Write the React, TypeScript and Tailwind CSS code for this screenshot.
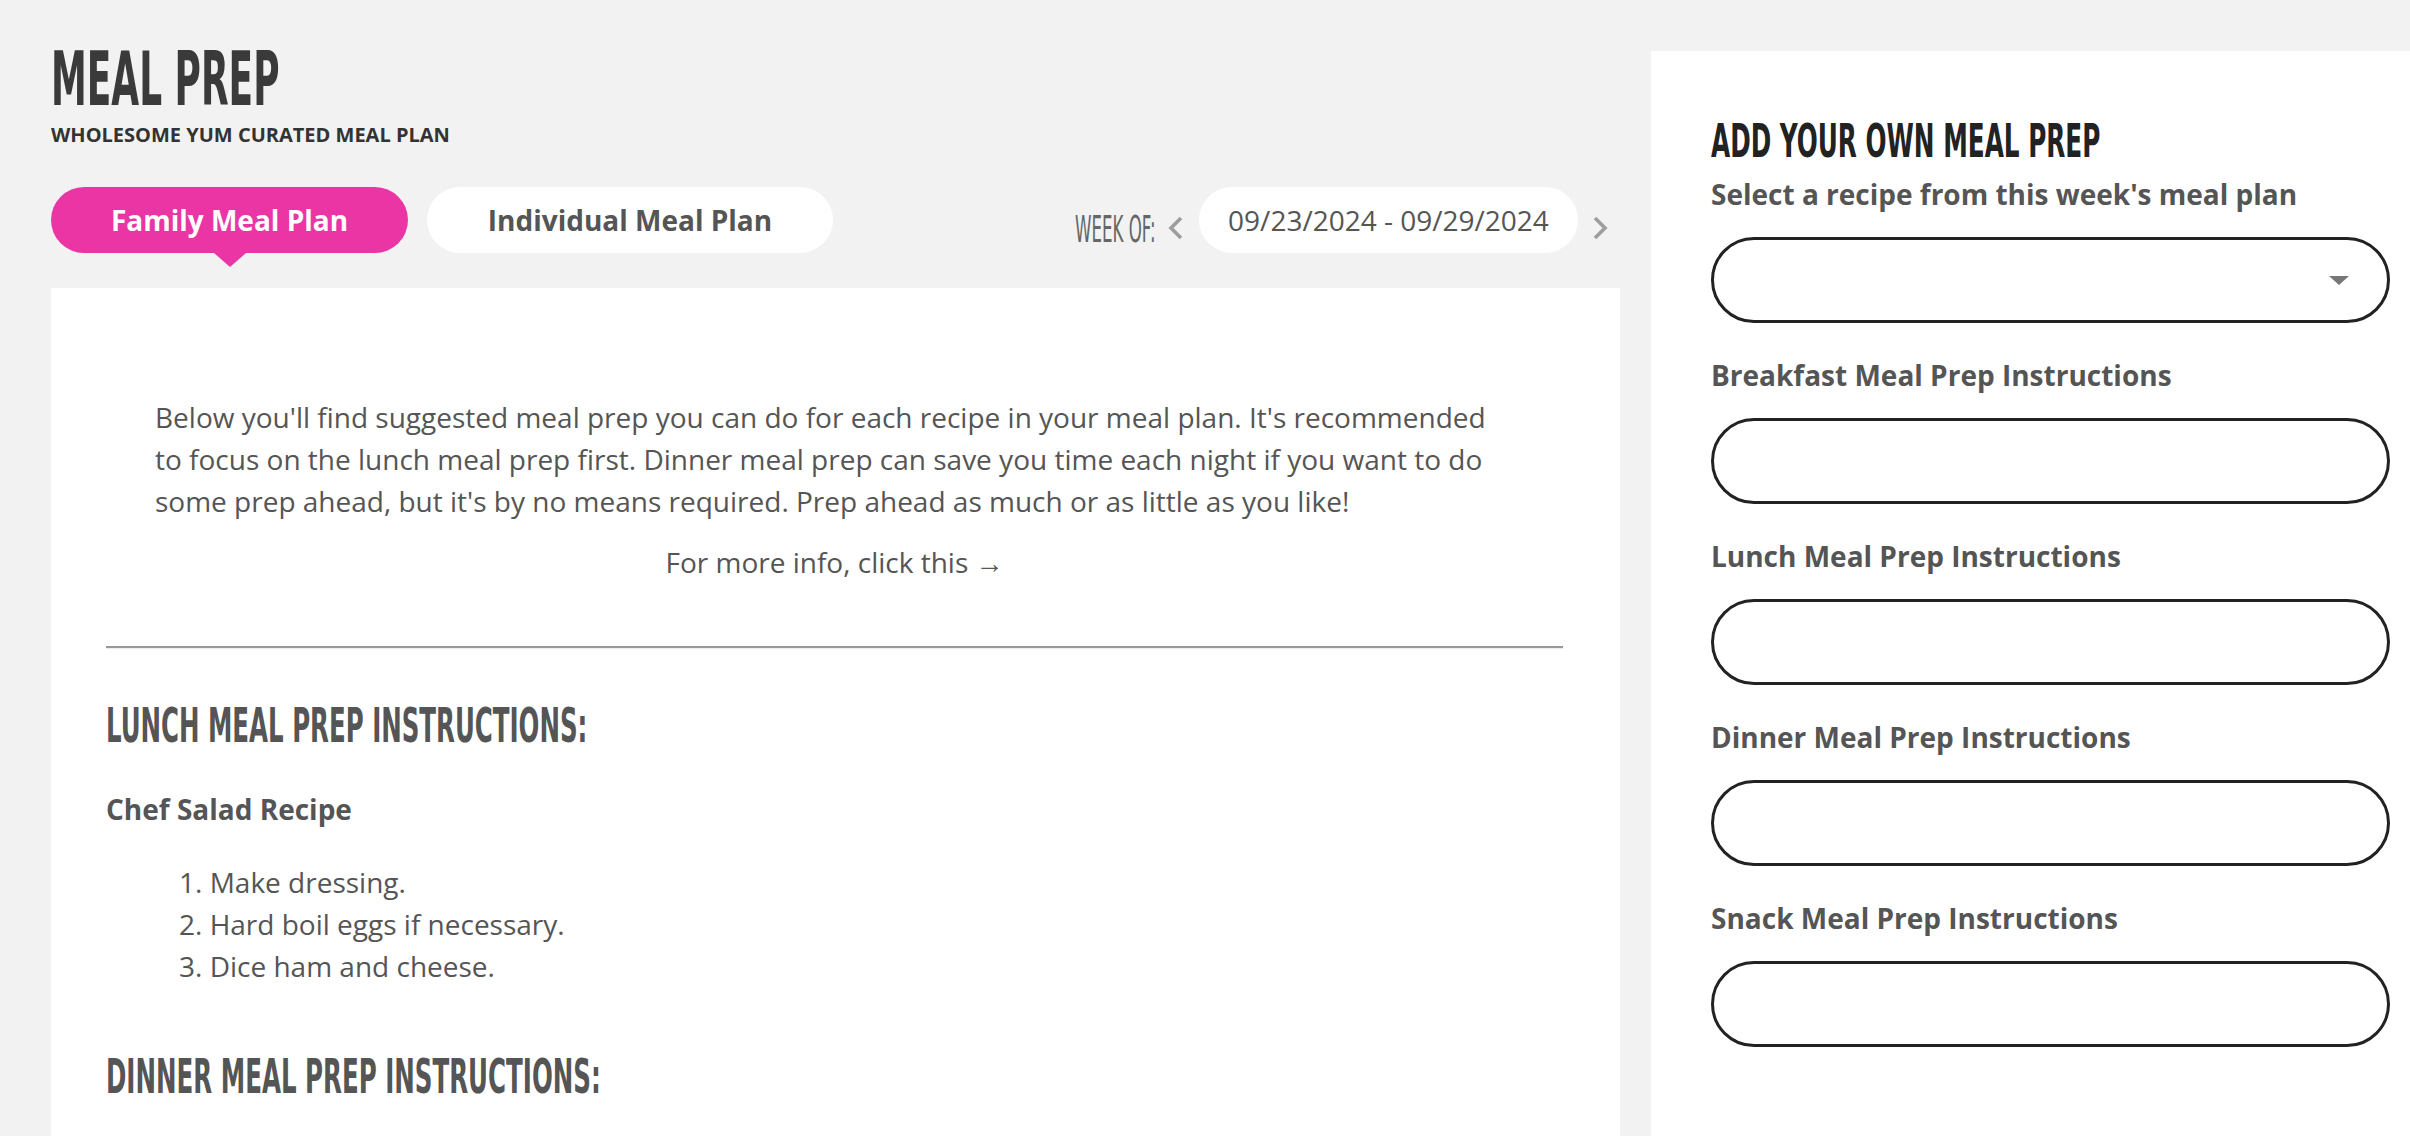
const HEAD = "font-['DejaVu_Sans_Condensed','Liberation_Sans_Narrow',sans-serif]";
const BODY = "font-['Open_Sans','Liberation_Sans',sans-serif]";

function Chevron({ dir }: { dir: "left" | "right" }) {
  return (
    <svg width="15" height="24" viewBox="0 0 15 24" className="mt-[29px] shrink-0">
      <polyline
        points={dir === "left" ? "13,2 3,12 13,22" : "2,2 12,12 2,22"}
        fill="none"
        stroke="#9e9e9e"
        strokeWidth="3.6"
      />
    </svg>
  );
}

function Field({ label, select = false }: { label: string; select?: boolean }) {
  return (
    <div className="mt-[38px] first:mt-[16px]">
      <label className="block text-[28px] font-bold leading-none text-[#555]">{label}</label>
      <div className="mt-[29px] flex h-[86px] items-center justify-end rounded-full border-[3px] border-[#222] bg-white pr-[38px]">
        {select && (
          <svg width="20" height="9" viewBox="0 0 20 9">
            <polygon points="0,0 20,0 10,9" fill="#777" />
          </svg>
        )}
      </div>
    </div>
  );
}

const steps = ["Make dressing.", "Hard boil eggs if necessary.", "Dice ham and cheese."];

export default function App() {
  return (
    <div className={`flex h-[1136px] w-full overflow-hidden bg-[#f2f2f2] ${BODY}`}>
      <main className="ml-[51px] flex w-[1569px] shrink-0 flex-col pt-[42px]">
        <h1 className={`${HEAD} text-[74px] font-bold leading-none text-[#3a3a3a]`}>
          <span className="inline-block origin-left scale-x-[0.54] whitespace-nowrap">MEAL PREP</span>
        </h1>
        <p className="mt-[9px] text-[20px] font-bold leading-none text-[#333]">
          WHOLESOME YUM CURATED MEAL PLAN
        </p>

        <div className="mt-[42px] flex items-start justify-between pr-[12px]">
          <div className="flex gap-[19px]">
            <button className="relative h-[66px] w-[357px] rounded-full bg-[#ec35a4] text-[28px] font-bold text-white">
              Family Meal Plan
              <span className="absolute left-1/2 top-full -translate-x-1/2 border-x-[16px] border-t-[14px] border-x-transparent border-t-[#ec35a4]" />
            </button>
            <button className="h-[66px] w-[406px] rounded-full bg-white text-[28px] font-bold text-[#555]">
              Individual Meal Plan
            </button>
          </div>

          <div className="flex items-start">
            <div className={`${HEAD} mt-[24px] w-[80px] text-[37px] leading-none text-[#666]`}>
              <span className="inline-block origin-left scale-x-[0.5] whitespace-nowrap">WEEK OF:</span>
            </div>
            <div className="ml-[13px]">
              <Chevron dir="left" />
            </div>
            <div className="ml-[16px] flex h-[66px] w-[379px] items-center justify-center rounded-full bg-white text-[28px] text-[#555]">
              09/23/2024 - 09/29/2024
            </div>
            <div className="ml-[15px]">
              <Chevron dir="right" />
            </div>
          </div>
        </div>

        <section className="mt-[35px] flex-1 bg-white pl-[55px] pr-[57px] pt-[108px] text-[#555]">
          <p className="px-[49px] text-[28px] leading-[42px]">
            Below you'll find suggested meal prep you can do for each recipe in your meal plan. It's recommended
            to focus on the lunch meal prep first. Dinner meal prep can save you time each night if you want to do
            some prep ahead, but it's by no means required. Prep ahead as much or as little as you like!
          </p>
          <p className="mt-[19px] text-center text-[28px] leading-[42px]">For more info, click this →</p>

          <div className="mt-[63px] h-[2px] bg-[#999]" />
          <div className="h-px bg-[#ececec]" />

          <h2 className={`${HEAD} mt-[52px] text-[48px] font-bold leading-none`}>
            <span className="inline-block origin-left scale-x-[0.567] whitespace-nowrap">
              LUNCH MEAL PREP INSTRUCTIONS:
            </span>
          </h2>
          <h3 className="mt-[46px] text-[28px] font-bold leading-none">Chef Salad Recipe</h3>
          <ol className="mt-[38px] list-inside list-decimal pl-[73px] text-[28px] leading-[42px]">
            {steps.map((s) => (
              <li key={s}>{s}</li>
            ))}
          </ol>

          <h2 className={`${HEAD} mt-[65px] text-[48px] font-bold leading-none`}>
            <span className="inline-block origin-left scale-x-[0.568] whitespace-nowrap">
              DINNER MEAL PREP INSTRUCTIONS:
            </span>
          </h2>
        </section>
      </main>

      <aside className="ml-[31px] mt-[51px] flex-1 bg-white pl-[60px] pr-[20px] pt-[66px]">
        <h2 className={`${HEAD} text-[47px] font-bold leading-none text-[#222]`}>
          <span className="inline-block origin-left scale-x-[0.585] whitespace-nowrap">ADD YOUR OWN MEAL PREP</span>
        </h2>
        <div>
          <Field label="Select a recipe from this week's meal plan" select />
          <Field label="Breakfast Meal Prep Instructions" />
          <Field label="Lunch Meal Prep Instructions" />
          <Field label="Dinner Meal Prep Instructions" />
          <Field label="Snack Meal Prep Instructions" />
        </div>
      </aside>
    </div>
  );
}
